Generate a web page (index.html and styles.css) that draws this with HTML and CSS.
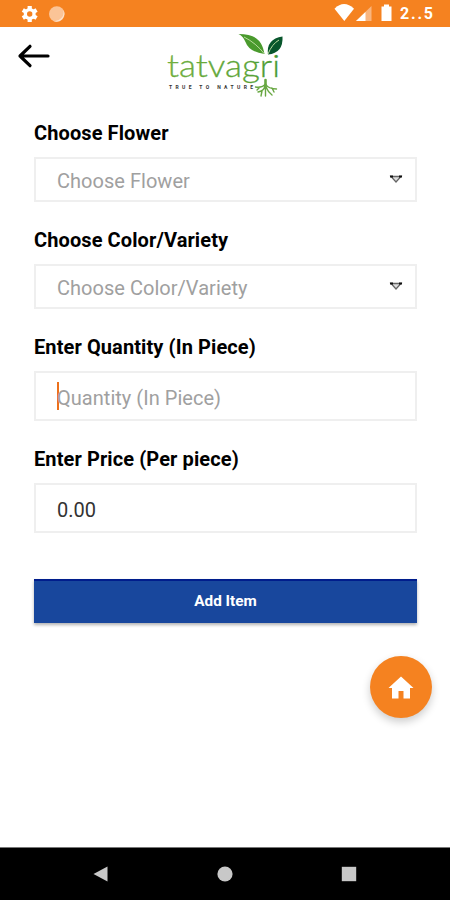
FILE: index.html
```html
<!DOCTYPE html>
<html lang="en">
<head>
<meta charset="utf-8">
<title>Add Item</title>
<link rel="stylesheet" href="styles.css">
</head>
<body>
<div class="screen">
  <div class="status">
    <svg class="status-left" width="50" height="27" viewBox="0 0 50 27">
      <g fill="#fff"><circle cx="14.7" cy="14" r="6"/><g stroke="#fff" stroke-width="4.2"><path d="M14.7 6v16M7.8 10l13.8 8M7.8 18l13.8-8"/></g></g>
      <circle cx="14.7" cy="14" r="2.7" fill="#f58220"/>
      <circle cx="41.8" cy="14" r="7.8" fill="#fbc497"/>
      <path d="M48 9.500a7.800 7.800 0 0 1-10 11.200A8.500 8.500 0 0 0 48 9.500z" fill="#fde3cd"/>
    </svg>
    <div class="status-right">
      <svg width="60" height="27" viewBox="0 0 60 27">
        <path d="M0.500 8.700Q10-0.500 20 8.700L10.300 21z" fill="#fff"/>
        <path d="M37.500 6v15H22z" fill="#f9b57e"/>
        <path d="M31.500 12v9H22z" fill="#fff"/>
        <path d="M50 4.500h5v2h2.500V21h-10V6.500H50z" fill="#fff"/>
      </svg>
      <span class="clock">2..5</span>
    </div>
  </div>
  <header class="header">
    <svg class="back" width="34" height="28" viewBox="0 0 34 28" fill="none" stroke="#000" stroke-width="3.200" stroke-linecap="round" stroke-linejoin="round"><path d="M31 14H3M13 4.300L3 14l10 9.700"/></svg>
    <svg class="logo" width="130" height="72" viewBox="0 0 130 72">
      <defs>
        <linearGradient id="word" x1="0" x2="1"><stop offset="0" stop-color="#77b33f"/><stop offset=".7" stop-color="#5aa336"/><stop offset="1" stop-color="#3f9634"/></linearGradient>
      </defs>
      <text class="word" x="7" y="49.500" textLength="113" lengthAdjust="spacingAndGlyphs" fill="url(#word)">tatvagri</text>
      <text class="tagline" x="9" y="61.500" textLength="84">TRUE TO NATURE</text>
      <path d="M78.500 7C94 7 102 12 104.500 27Q89 25 85.500 15Q83 9 78.500 7z" fill="#4a9a2d"/>
      <path d="M122.500 9.500Q123.500 26 108 27.500Q106 12 122.500 9.500z" fill="#08562c"/>
      <path d="M84 10Q96 16 104.500 27M108 27Q112 17 119 13" fill="none" stroke="#b9db9d" stroke-width="1"/>
      <g fill="none" stroke="#68a742" stroke-width="1.400" stroke-linecap="round"><path stroke-width="2.600" d="M105.500 53v7"/><path d="M105.500 57q-3 4-10 3M105.500 57q3 5 11 5M105 59q-1 5-7 6M105.500 59v10M106 60q2 5 6 8M102 64l-1 5M112 61l2 4M100 60l-3 3"/></g>
    </svg>
  </header>
  <main class="form">
    <label class="label">Choose Flower</label>
    <div class="field select"><span>Choose Flower</span>
      <svg width="14" height="9" viewBox="0 0 14 9"><path d="M2 1.500h10L7 7z" fill="#ddd" stroke="#666" stroke-width="1.300"/><path d="M1 1.500h3M10 1.500h3" stroke="#111" stroke-width="2"/></svg>
    </div>
    <label class="label">Choose Color/Variety</label>
    <div class="field select"><span>Choose Color/Variety</span>
      <svg width="14" height="9" viewBox="0 0 14 9"><path d="M2 1.500h10L7 7z" fill="#ddd" stroke="#666" stroke-width="1.300"/><path d="M1 1.500h3M10 1.500h3" stroke="#111" stroke-width="2"/></svg>
    </div>
    <label class="label">Enter Quantity (In Piece)</label>
    <div class="field input"><i class="caret"></i><span>Quantity (In Piece)</span></div>
    <label class="label">Enter Price (Per piece)</label>
    <div class="field input value"><span>0.00</span></div>
    <button class="add">Add Item</button>
  </main>
  <div class="fab">
    <svg width="26" height="23" viewBox="0 0 26 23"><path d="M13 0.500L25.500 12H22v10.500h-6.500V15h-5v7.500H4V12H0.500z" fill="#fff"/></svg>
  </div>
  <nav class="nav">
    <svg width="16" height="16" viewBox="0 0 16 16"><path d="M.5 8L14.500 0.500v15z" fill="#c8c8c8"/></svg>
    <svg width="16" height="16" viewBox="0 0 16 16"><circle cx="8" cy="8" r="7.600" fill="#c8c8c8"/></svg>
    <svg width="16" height="16" viewBox="0 0 16 16"><path d="M.8.8h14.400v14.400H.8z" fill="#c8c8c8"/></svg>
  </nav>
</div>
</body>
</html>
```
FILE: styles.css
```css
* { box-sizing: border-box; }
body { margin: 0; background: #fff; font-family: Roboto, sans-serif; }
.screen { position: relative; width: 450px; height: 900px; display: flex; flex-direction: column; overflow: hidden; }
.status { height: 27px; background: #f58220; display: flex; justify-content: space-between; padding: 0 17px 0 15px; }
.status-right { display: flex; gap: 6px; }
.clock { font-size: 16px; line-height: 28px; font-weight: 700; letter-spacing: 1.8px; color: #fff; width: 33px; white-space: nowrap; }
.header { height: 92px; display: flex; align-items: flex-start; padding-left: 17px; }
.back { margin-top: 15px; }
.logo { margin-left: 109px; }
.word { font: 300 31px Lato, sans-serif; stroke: #5fa63a; stroke-width: .3px; }
.tagline { font: 700 5px Roboto, sans-serif; fill: #333; }
.form { padding: 0 33px 0 34px; flex: 1; display: flex; flex-direction: column; }
.label { height: 28px; line-height: 28px; margin-bottom: 10px; font-size: 20px; font-weight: 700; letter-spacing: .1px; color: #000; white-space: nowrap; }
.field { border: 2px solid #efefef; display: flex; align-items: center; padding: 2px 12px 0 21px; font-size: 20px; letter-spacing: .03px; color: #a0a0a0; margin-bottom: 24px; }
.select { height: 45px; justify-content: space-between; }
.select svg { margin-top: -2px; }
.input { height: 50px; padding-top: 3px; }
.value { color: #333; margin-bottom: 46px; }
.caret { width: 2px; height: 28px; background: #ec701b; margin: -4px -2px 0 0; }
.add { height: 44px; border: 0; border-top: 2px solid #001d8c; background: #18479d; color: #fff; font: 700 15.3px Roboto, sans-serif; box-shadow: 0 2px 3px rgba(0,0,0,.3); padding: 0 0 2px; }
.fab { position: absolute; left: 370px; top: 656px; width: 62px; height: 62px; border-radius: 50%; background: #f58220; box-shadow: 0 4px 8px rgba(0,0,0,.2); display: flex; align-items: center; justify-content: center; }
.nav { height: 53px; background: #000; border-top: 1px solid #777; display: flex; justify-content: space-between; align-items: center; padding: 0 93px; }
```
